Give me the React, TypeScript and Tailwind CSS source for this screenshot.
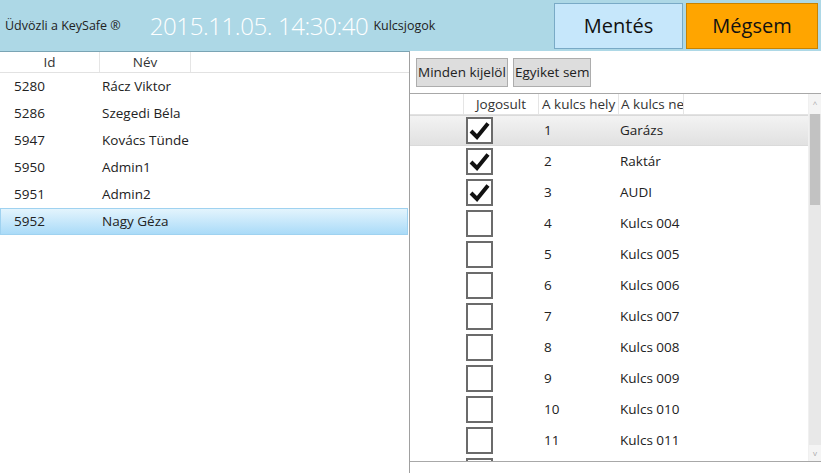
import React from "react";

const users = [
  { id: "5280", name: "Rácz Viktor" },
  { id: "5286", name: "Szegedi Béla" },
  { id: "5947", name: "Kovács Tünde" },
  { id: "5950", name: "Admin1" },
  { id: "5951", name: "Admin2" },
  { id: "5952", name: "Nagy Géza" },
];

const keys = [
  { pos: "1", name: "Garázs", ok: true },
  { pos: "2", name: "Raktár", ok: true },
  { pos: "3", name: "AUDI", ok: true },
  { pos: "4", name: "Kulcs 004", ok: false },
  { pos: "5", name: "Kulcs 005", ok: false },
  { pos: "6", name: "Kulcs 006", ok: false },
  { pos: "7", name: "Kulcs 007", ok: false },
  { pos: "8", name: "Kulcs 008", ok: false },
  { pos: "9", name: "Kulcs 009", ok: false },
  { pos: "10", name: "Kulcs 010", ok: false },
  { pos: "11", name: "Kulcs 011", ok: false },
  // last row is scrolled mostly out of view, only the box top shows
  { pos: "", name: "", ok: false },
];

function CheckBox({ checked }: { checked: boolean }) {
  return (
    <div className="w-[27px] h-[27px] border-2 border-[#6b6b6b] bg-white flex items-center justify-center">
      {checked && (
        <svg width="21" height="19" viewBox="0 0 21 19">
          <path d="M2 10 L8 16 L19 2.5" fill="none" stroke="#111" strokeWidth="4" strokeLinejoin="miter" />
        </svg>
      )}
    </div>
  );
}

export default function App() {
  return (
    <div
      className="w-[821px] h-[473px] bg-white overflow-hidden flex flex-col text-[#222]"
      style={{ fontFamily: '"Open Sans", "Noto Sans", sans-serif' }}
    >
      {/* header */}
      <div className="h-[51px] bg-[#add8e6] flex items-center pl-[5px] pr-[3px] shrink-0">
        <span className="text-[12.5px] mt-[2px]">Üdvözli a KeySafe ®</span>
        <span className="text-[24px] font-light text-white ml-[29px] tracking-[-0.4px]">2015.11.05. 14:30:40</span>
        <span className="text-[12.5px] ml-[5px] mt-[2px]">Kulcsjogok</span>
        <div className="ml-auto flex gap-[3px] self-stretch py-[3px] pb-[2px]">
          <button className="w-[129px] bg-[#c6e7fb] border border-[#79aac6] text-[20px] text-[#111]">Mentés</button>
          <button className="w-[132px] bg-[#ffa500] border border-[#c98200] text-[20px] text-[#111]">Mégsem</button>
        </div>
      </div>

      <div className="flex flex-1 min-h-0">
        {/* users list */}
        <div className="w-[410px] border-r border-[#a0a0a0] border-t border-t-[#7aa4b4] shrink-0">
          <div className="flex h-[21px] border-b border-[#e2e2e2] text-[13.5px] text-[#333]">
            <div className="w-[100px] text-center border-r border-[#e5e5e5] leading-[20px]">Id</div>
            <div className="w-[91px] text-center border-r border-[#e5e5e5] leading-[20px]">Név</div>
          </div>
          {users.map((u, i) => (
            <div
              key={u.id}
              className={
                "flex h-[27px] items-center text-[13.5px] mr-[1px] " +
                (i === users.length - 1
                  ? "bg-gradient-to-b from-[#e3f4fd] to-[#aadbf8] border border-[#9fd2f0]"
                  : "border border-transparent")
              }
            >
              <div className="w-[101px] pl-[13px]">{u.id}</div>
              <div>{u.name}</div>
            </div>
          ))}
        </div>

        {/* keys */}
        <div className="flex-1 flex flex-col min-w-0">
          <div className="h-[42px] flex items-center gap-[5px] pl-[6px] pt-[1px] shrink-0">
            <button className="h-[29px] px-[1px] bg-[#dddddd] border border-[#adadad] text-[13.5px]">Minden kijelöl</button>
            <button className="h-[29px] px-[1px] bg-[#dddddd] border border-[#adadad] text-[13.5px]">Egyiket sem</button>
          </div>
          <div className="h-[369px] border-t border-b border-[#a8a8a8] flex overflow-hidden shrink-0">
            <div className="flex-1 min-w-0 overflow-hidden">
              <div className="flex h-[21px] border-b border-[#e2e2e2] text-[13.5px] text-[#333] whitespace-nowrap">
                <div className="w-[54px] border-r border-[#e5e5e5]"></div>
                <div className="w-[75px] text-center border-r border-[#e5e5e5] leading-[20px]">Jogosult</div>
                <div className="w-[80px] pl-[3px] border-r border-[#e5e5e5] leading-[20px] overflow-hidden">A kulcs hely</div>
                <div className="w-[65px] pl-[2px] border-r border-[#e5e5e5] leading-[20px] overflow-hidden">A kulcs ne</div>
              </div>
              {keys.map((k, i) => (
                <div
                  key={i}
                  className={
                    "flex h-[31px] items-center text-[13.5px] " +
                    (i === 0 ? "bg-gradient-to-b from-[#f3f3f3] to-[#e1e1e1] border-y border-[#dadada]" : "")
                  }
                >
                  <div className="w-[56px]"></div>
                  <div className="w-[78px]">
                    <CheckBox checked={k.ok} />
                  </div>
                  <div className="w-[76px]">{k.pos}</div>
                  <div>{k.name}</div>
                </div>
              ))}
            </div>
            {/* scrollbar */}
            <div className="w-[13px] bg-[#e8e8e8] flex flex-col shrink-0 border-l border-[#f0f0f0]">
              <div className="h-[20px] bg-[#f4f4f4] flex items-center justify-center text-[8px] text-[#aaa]">^</div>
              <div className="h-[91px] bg-[#c2c2c2] mx-[1px]"></div>
              <div className="flex-1"></div>
              <div className="h-[16px] bg-[#f4f4f4] flex items-center justify-center text-[8px] text-[#aaa]">v</div>
            </div>
          </div>
        </div>
      </div>
    </div>
  );
}
